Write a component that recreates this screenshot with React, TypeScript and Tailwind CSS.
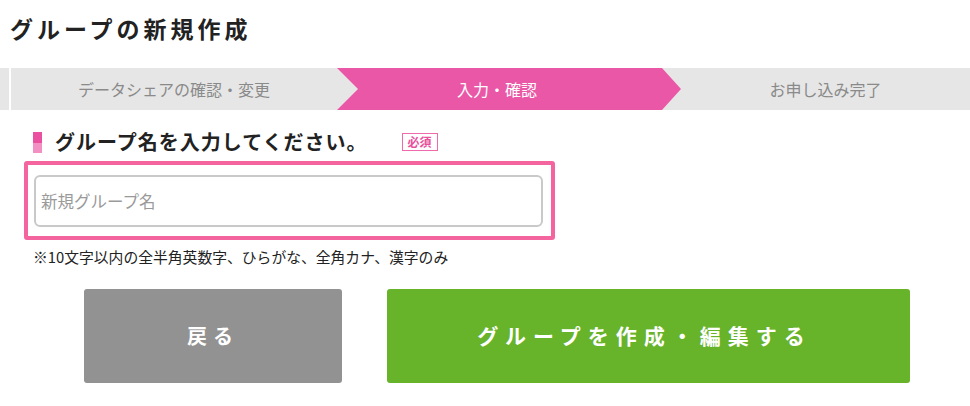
import React from 'react';

const StepBar = () => (
  <div className="flex h-[42px] bg-[#e6e6e6] text-[16px] leading-none">
    <div className="w-[9px]" />
    <div className="w-[2px] bg-white" />
    <div className="w-[326px] flex items-center justify-center text-[#8a8a8a]">データシェアの確認・変更</div>
    <div className="w-[344px] pr-[24px] bg-[#ea57a6] [clip-path:polygon(0_0,325px_0,100%_50%,325px_100%,0_100%,21px_50%)] flex items-center justify-center text-white">
      入力・確認
    </div>
    <div className="flex-1 flex items-center justify-center text-[#8a8a8a]">お申し込み完了</div>
  </div>
);

export default function App() {
  return (
    <div className="w-[970px] h-[406px] bg-white overflow-hidden font-['Noto_Sans_CJK_JP','Noto_Sans',sans-serif] text-[#222]">
      <h1 className="h-[68px] pl-[10px] pt-[13px] text-[23px] leading-[30px] font-bold tracking-[4px]">グループの新規作成</h1>

      <StepBar />

      <div className="mt-[21px] h-[22px] flex items-center">
        <div className="ml-[33px] w-[9px] h-[21px] flex flex-col">
          <div className="h-[11px] bg-[#eb4fa0]" />
          <div className="flex-1 bg-[#f290c3]" />
        </div>
        <h2 className="ml-[13px] text-[20px] leading-none font-bold tracking-[1px]">グループ名を入力してください。</h2>
        <span className="ml-[34px] h-[18px] px-[5px] flex items-center border border-[#ee6aaa] text-[#e8509b] text-[12px] leading-none font-bold">必須</span>
      </div>

      <div className="mt-[8px] ml-[24px] w-[531px] h-[79px] border-[4px] border-[#f4649f] rounded-[3px] pt-[10px] pb-[9px] pl-[6px] pr-[8px]">
        <input
          placeholder="新規グループ名"
          className="w-full h-full border-2 border-[#c9c9c9] rounded-[6px] pl-[5px] text-[16.5px] text-[#333] placeholder:text-[#9a9a9a] outline-none"
        />
      </div>

      <p className="mt-[7px] ml-[33px] text-[14.8px] leading-[20px] text-[#222]">※10文字以内の全半角英数字、ひらがな、全角カナ、漢字のみ</p>

      <div className="mt-[22px] flex">
        <button className="ml-[84px] w-[258px] h-[94px] rounded-[3px] bg-[#929292] text-white text-[20px] font-bold tracking-[6px]">
          戻る
        </button>
        <button className="ml-[45px] w-[523px] h-[94px] rounded-[3px] bg-[#67b32a] text-white text-[21px] font-bold tracking-[7px] pr-[8px]">
          グループを作成・編集する
        </button>
      </div>
    </div>
  );
}
